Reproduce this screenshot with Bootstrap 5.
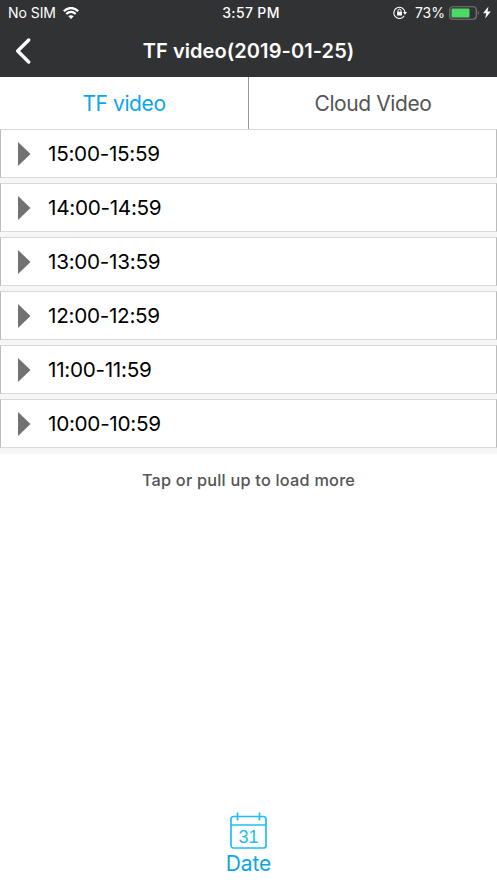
<!DOCTYPE html>
<html lang="en">
<head>
<meta charset="utf-8">
<meta name="viewport" content="width=device-width, initial-scale=1">
<title>TF video</title>
<link href="https://cdn.jsdelivr.net/npm/bootstrap@5.3.0/dist/css/bootstrap.min.css" rel="stylesheet">
<style>
body { font-family: Inter, "Liberation Sans", sans-serif; color: #000; line-height: 1.2; }
svg { display: block; flex: none; }
.topbar { height: 77px; background: #313234; }
.status { height: 26px; font-size: 14px; padding: 0 6px 0 8px; }
.status > * { flex: 1 1 0; }
.carrier { letter-spacing: -.05px; gap: 7px; }
.clock { font-weight: 500; letter-spacing: .35px; padding-left: 3px; }
.bolt { margin-left: 3px; }
.titlebar { display: grid; grid-template-columns: 48px 1fr 48px; height: 49px; font-size: 20px; font-weight: 600; letter-spacing: .08px; }
.tabs { height: 52px; font-size: 21px; letter-spacing: -.4px; }
.tabs .btn { border: 0; border-radius: 0; font-size: inherit; line-height: 1.2; padding: 2px 0 0; color: #555; flex: 1 1 0; letter-spacing: inherit; }
.tabs .btn.active { color: #0ba5ea; border-right: 1px solid #999; }
.hours { background: #f6f6f6; gap: 5px; padding-bottom: 6px; }
.hours .list-group-item { height: 49px; padding: 0 0 0 16px; border: 1px solid #ccc; border-color: #d9d9d9 #bbb; color: #000; font-size: 20.7px; letter-spacing: -.28px; }
.hours svg { margin-right: 17px; }
.hours span { padding-top: 2px; }
.more { font-size: 16.3px; font-weight: 500; color: #555; padding-top: 17px; letter-spacing: .22px; }
.date { color: #0ba5ea; font-size: 21px; padding-bottom: 7px; text-decoration: none; letter-spacing: -.1px; }
.date svg { margin-bottom: 1px; font-family: "Liberation Sans", sans-serif; }
</style>
</head>
<body class="d-flex flex-column vh-100 overflow-hidden bg-white">
<header class="topbar text-white">
  <div class="status d-flex align-items-center">
    <div class="d-flex align-items-center carrier">
      <span>No SIM</span>
      <svg width="16" height="12" viewBox="0 0 16 12" fill="none" stroke="#fff" stroke-width="2.3"><path d="M.8 4.300C5-.100 11-.100 15.200 4.300M3.300 7c2.800-2.700 6.600-2.700 9.400 0"/><path d="M8 11.900L5.300 9.200c1.600-1.400 3.800-1.400 5.400 0z" fill="#fff" stroke="none"/></svg>
    </div>
    <div class="text-center clock">3:57 PM</div>
    <div class="d-flex align-items-center justify-content-end">
      <svg class="me-2" width="14" height="13" viewBox="0 0 14 13" fill="none" stroke="#fff"><path d="M11.300 9.700A5.600 5.600 0 1 1 12 6.200" stroke-width="1.100"/><path d="M10 6h4l-2 2.700z" fill="#fff" stroke="none"/><rect x="4" y="5.800" width="5" height="3.800" rx=".5" fill="#fff" stroke="none"/><path d="M5 6V4.700a1.500 1.500 0 0 1 3 0V6"/></svg>
      <span class="me-1">73%</span>
      <svg width="31" height="14" viewBox="0 0 31 14"><rect x=".75" y=".75" width="26.500" height="12.500" rx="3" fill="none" stroke="#77787a" stroke-width="1.200"/><rect x="2.500" y="2.500" width="18" height="9" rx="1" fill="#4cd964"/><path d="M28.800 4.800q2.200 2.200 0 4.400z" fill="#77787a"/></svg>
      <svg class="bolt" width="8" height="13" viewBox="0 0 8 13"><path d="M5.500.5L0 7.200h3.300L2.200 12.500 7.800 5.500H4.500z" fill="#fff"/></svg>
    </div>
  </div>
  <div class="titlebar align-items-center text-center">
    <svg class="ms-3" width="16" height="28" viewBox="0 0 16 28" fill="none" stroke="#fff" stroke-width="3.400" stroke-linecap="round" stroke-linejoin="round"><path d="M12.700 3L1.700 14l11 11"/></svg>
    <span>TF video(2019-01-25)</span>
  </div>
</header>
<nav class="tabs d-flex">
  <button class="btn active">TF video</button>
  <button class="btn">Cloud Video</button>
</nav>
<div class="list-group rounded-0 hours">
  <div class="list-group-item rounded-0 d-flex align-items-center"><svg width="14" height="24" viewBox="0 0 14 24"><path d="M1 0l12.500 12L1 24z" fill="#717171"/></svg><span>15:00-15:59</span></div>
  <div class="list-group-item rounded-0 d-flex align-items-center"><svg width="14" height="24" viewBox="0 0 14 24"><path d="M1 0l12.500 12L1 24z" fill="#717171"/></svg><span>14:00-14:59</span></div>
  <div class="list-group-item rounded-0 d-flex align-items-center"><svg width="14" height="24" viewBox="0 0 14 24"><path d="M1 0l12.500 12L1 24z" fill="#717171"/></svg><span>13:00-13:59</span></div>
  <div class="list-group-item rounded-0 d-flex align-items-center"><svg width="14" height="24" viewBox="0 0 14 24"><path d="M1 0l12.500 12L1 24z" fill="#717171"/></svg><span>12:00-12:59</span></div>
  <div class="list-group-item rounded-0 d-flex align-items-center"><svg width="14" height="24" viewBox="0 0 14 24"><path d="M1 0l12.500 12L1 24z" fill="#717171"/></svg><span>11:00-11:59</span></div>
  <div class="list-group-item rounded-0 d-flex align-items-center"><svg width="14" height="24" viewBox="0 0 14 24"><path d="M1 0l12.500 12L1 24z" fill="#717171"/></svg><span>10:00-10:59</span></div>
</div>
<div class="more text-center">Tap or pull up to load more</div>
<a class="date mt-auto d-flex flex-column align-items-center" href="#">
  <svg width="37" height="38" viewBox="0 0 37 38" fill="none" stroke="#22bdf4" stroke-width="1.700"><rect x="1" y="4.500" width="35" height="31.500" rx="2.500"/><path d="M1 13h35M7.500.500v8M29.500.500v8"/><text x="18.500" y="30.500" text-anchor="middle" font-size="18" fill="#22bdf4" stroke="none">31</text></svg>
  <span>Date</span>
</a>
<script src="https://cdn.jsdelivr.net/npm/bootstrap@5.3.0/dist/js/bootstrap.bundle.min.js"></script>
</body>
</html>
